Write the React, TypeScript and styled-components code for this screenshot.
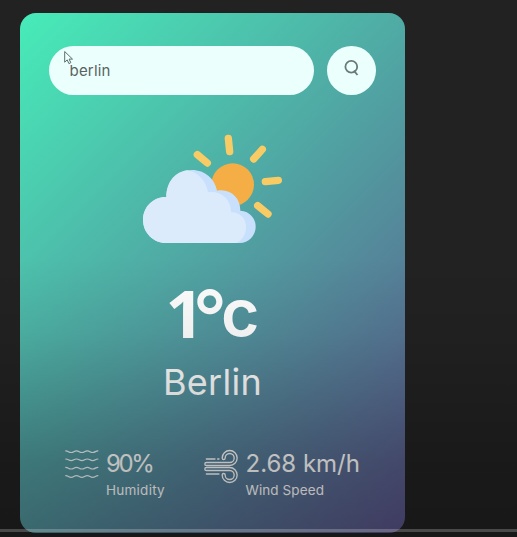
import React from "react";
import styled, { createGlobalStyle } from "styled-components";

const GlobalStyle = createGlobalStyle`
  * { box-sizing: border-box; }
  body {
    margin: 0;
    background: #222222;
    font-family: Inter, "Open Sans", sans-serif;
    overflow: hidden;
  }
`;

const Page = styled.main`
  position: relative;
  width: 517px;
  height: 537px;
  padding: 13px 0 0 20px;
  background: #222222;
  overflow: hidden;
`;

const Card = styled.section`
  display: flex;
  flex-direction: column;
  align-items: center;
  width: 385px;
  height: 519.5px;
  padding-top: 32.5px;
  border-radius: 16px;
  background: linear-gradient(135deg, #47ecb9, #5b548a);
  color: #fff;
`;

const SearchRow = styled.form`
  display: flex;
  align-self: stretch;
  justify-content: space-between;
  height: 49.5px;
  padding: 0 29px;
  margin-bottom: 30px;
`;

const SearchInput = styled.input`
  width: 265px;
  height: 49.5px;
  padding: 1px 20.5px 0;
  border: 0;
  outline: 0;
  border-radius: 25px;
  background: #ebfffc;
  color: #5a6261;
  font: 400 15px/20px Inter, sans-serif;
  letter-spacing: 0.2px;
`;

const SearchButton = styled.button`
  display: flex;
  justify-content: center;
  align-items: flex-start;
  width: 49.5px;
  height: 49.5px;
  padding: 13.5px 0 0;
  border: 0;
  border-radius: 50%;
  background: #ebfffc;
`;

const WeatherArt = styled.svg`
  flex: none;
  width: 160px;
  height: 130px;
  margin-right: 5px;
`;

const Temperature = styled.h1`
  display: flex;
  margin: 25px 0 0;
  height: 64px;
  line-height: 64px;
  font-size: 66px;
  font-weight: 600;
`;

const Digits = styled.span`
  font-family: "Open Sans", sans-serif;
  font-size: 67px;
  font-weight: 700;
  letter-spacing: -11px;
`;

const Degree = styled.span`
  padding-top: 5px;
  font-size: 75px;
  font-weight: 500;
  letter-spacing: -6px;
`;

const City = styled.h2`
  margin: 16px 0 0;
  height: 44px;
  font-size: 36px;
  line-height: 44px;
  font-weight: 400;
  letter-spacing: 0.3px;
`;

const Details = styled.div`
  display: flex;
  align-self: stretch;
  margin-top: 43.5px;
  padding-left: 44.5px;
`;

const Detail = styled.div<{ $width: number }>`
  display: flex;
  gap: 7.5px;
  width: ${(p) => p.$width}px;
`;

const DetailIcon = styled.svg`
  flex: none;
  width: 34px;
  height: 36px;
`;

const Value = styled.p<{ $spacing: number }>`
  margin: 0;
  font-size: 24px;
  line-height: 32px;
  white-space: nowrap;
  letter-spacing: ${(p) => p.$spacing}px;
`;

const Label = styled.p<{ $spacing: number }>`
  margin: 0;
  font-size: 13.5px;
  line-height: 20px;
  white-space: nowrap;
  letter-spacing: ${(p) => p.$spacing}px;
`;

const Shade = styled.div`
  position: absolute;
  inset: 0;
  pointer-events: none;
  background: linear-gradient(
    to bottom,
    rgba(0, 0, 0, 0) 48%,
    rgba(0, 0, 0, 0.06) 62%,
    rgba(0, 0, 0, 0.13) 71%,
    rgba(0, 0, 0, 0.25) 86%,
    rgba(0, 0, 0, 0.3) 100%
  );
`;

const ProgressTrack = styled.div`
  position: absolute;
  left: 0;
  right: 0;
  top: 529px;
  height: 3px;
  background: rgba(255, 255, 255, 0.22);
`;

const Pointer = styled.svg`
  position: absolute;
  left: 62.5px;
  top: 50px;
  width: 11px;
  height: 15px;
`;

const PartlyCloudy = () => (
  <WeatherArt viewBox="0 0 480 390">
    <g stroke="#f9cb64" strokeWidth="22" strokeLinecap="round">
      <path d="M202 89 232 114M295 40 299 80M397 73 371 102M406 170 445 166M383 242 414 267" />
    </g>
    <circle cx="308" cy="179" r="64" fill="#f5ad45" />
    <path
      fill="#c8e0fb"
      d="M108 354C70 354 39 323 39 285C39 246 70 215 109 216C109 170 143 135 186 135C225 135 255 162 261 197C300 190 331 216 331 257C360 259 377 280 377 305C377 332 356 354 329 354Z"
    />
    <path
      fill="#dbebfc"
      d="M108 354C70 354 39 323 39 285C39 246 70 215 109 216C109 170 136 140 172 136C204 141 229 168 234 202C273 197 303 222 303 262C330 261 348 281 348 305C348 327 338 345 319 354Z"
    />
  </WeatherArt>
);

const HumidityIcon = () => (
  <DetailIcon viewBox="0 0 34 36" fill="none" stroke="#fff" strokeOpacity="0.92" strokeWidth="1.2" strokeLinecap="round">
    {[3.6, 11.8, 20.1, 28.4].map((y) => (
      <path
        key={y}
        d={`M.7 ${y - 0.8}c2.7 0 2.7 1.7 5.4 1.7s2.7-1.7 5.4-1.7 2.7 1.7 5.4 1.7 2.7-1.7 5.4-1.7 2.7 1.7 5.4 1.7 2.7-1.7 5.2-1.7`}
      />
    ))}
  </DetailIcon>
);

const upperGust = "M34 86H104A18 18 0 1 0 86 68";
const lowerGust = "M34 101H104A18 18 0 1 1 86 119";

const WindIcon = () => (
  <DetailIcon viewBox="27 38 102 108" fill="none" strokeLinecap="round">
    <mask id="gust-outline" maskUnits="userSpaceOnUse" x="20" y="30" width="120" height="120">
      <g stroke="#fff" strokeWidth="13">
        <path d={upperGust} />
        <path d={lowerGust} />
      </g>
      <g stroke="#000" strokeWidth="5">
        <path d={upperGust} />
        <path d={lowerGust} />
      </g>
    </mask>
    <rect x="20" y="30" width="120" height="120" fill="#fff" mask="url(#gust-outline)" />
    <path d="M34 71H60M68 71H72M34 116H72" stroke="#fff" strokeWidth="3.8" />
  </DetailIcon>
);

export default function App() {
  return (
    <>
      <GlobalStyle />
      <Page>
        <Card>
          <SearchRow onSubmit={(e) => e.preventDefault()}>
            <SearchInput defaultValue="berlin" spellCheck={false} aria-label="City" />
            <SearchButton aria-label="Search">
              <svg width="18" height="19" viewBox="0 0 18 19" fill="none" stroke="#6b7a78" strokeWidth="1.8">
                <circle cx="9.3" cy="7.8" r="5.9" />
                <path d="m11.8 11.6 3.7 4.4" />
              </svg>
            </SearchButton>
          </SearchRow>
          <PartlyCloudy />
          <Temperature>
            <Digits>1</Digits>
            <Degree>°</Degree>c
          </Temperature>
          <City>Berlin</City>
          <Details>
            <Detail $width={139.5}>
              <HumidityIcon />
              <div>
                <Value $spacing={-2.4}>90%</Value>
                <Label $spacing={0.25}>Humidity</Label>
              </div>
            </Detail>
            <Detail $width={170}>
              <WindIcon />
              <div>
                <Value $spacing={0}>2.68 km/h</Value>
                <Label $spacing={0.1}>Wind Speed</Label>
              </div>
            </Detail>
          </Details>
        </Card>
        <Pointer viewBox="0 0 11 15">
          <path
            d="M1.7 1.5v10.7l2.5-2.3 1.7 3.7 1.9-.9-1.7-3.6h3.4z"
            fill="#f5ffff"
            stroke="#56716e"
            strokeWidth="1"
          />
        </Pointer>
        <Shade />
        <ProgressTrack />
      </Page>
    </>
  );
}
